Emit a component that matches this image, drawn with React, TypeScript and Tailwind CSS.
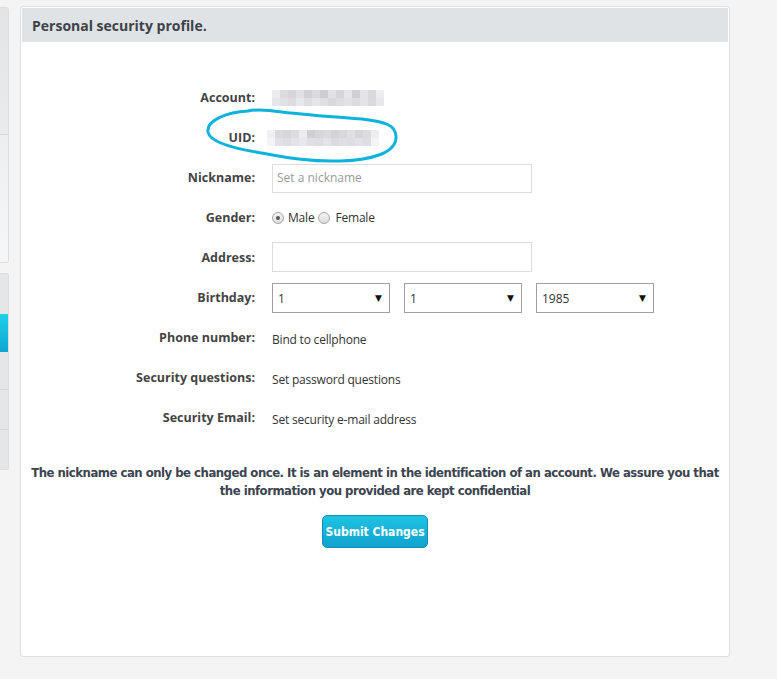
import React from 'react';

const labelFont = "font-['Open_Sans','DejaVu_Sans',sans-serif]";

// Pixelated "blurred" value blocks
const accountBlur = [
  ['bg-[#ececef]', 'bg-[#dcdce0]', 'bg-[#d6d6da]', 'bg-[#e0e0e4]', 'bg-[#d2d2d6]', 'bg-[#dadadf]', 'bg-[#cdcdd2]', 'bg-[#e2e2e6]', 'bg-[#d4d4da]', 'bg-[#e6e6ea]', 'bg-[#cfcfd4]', 'bg-[#e4e4e8]', 'bg-[#d9d9dd]', 'bg-[#ededf0]'],
  ['bg-[#e6e6ea]', 'bg-[#e2e2e6]', 'bg-[#dcdce0]', 'bg-[#e8e8ec]', 'bg-[#dedee2]', 'bg-[#e6e6ea]', 'bg-[#e0e0e4]', 'bg-[#d8d8dc]', 'bg-[#dedee2]', 'bg-[#e2e2e6]', 'bg-[#dcdce0]', 'bg-[#e4e4e8]', 'bg-[#dadade]', 'bg-[#e8e8ec]'],
];
const uidBlur = [
  ['bg-[#f0f0f2]', 'bg-[#dadade]', 'bg-[#d6d6da]', 'bg-[#dcdce0]', 'bg-[#ececef]', 'bg-[#cfcfd4]', 'bg-[#d6d6da]', 'bg-[#dadade]', 'bg-[#d3d3d8]', 'bg-[#d8d8dc]', 'bg-[#e0e0e4]', 'bg-[#d6d6da]', 'bg-[#dcdce0]', 'bg-[#eeeef0]'],
  ['bg-[#f4f4f6]', 'bg-[#e2e2e6]', 'bg-[#dedee2]', 'bg-[#e4e4e8]', 'bg-[#e8e8ec]', 'bg-[#e0e0e4]', 'bg-[#dedee2]', 'bg-[#e4e4e8]', 'bg-[#dcdce0]', 'bg-[#e0e0e4]', 'bg-[#dedee2]', 'bg-[#e2e2e6]', 'bg-[#dedee2]', 'bg-[#f4f4f6]'],
];

function Blur({ rows }: { rows: string[][] }) {
  return (
    <div className="flex flex-col">
      {rows.map((row, i) => (
        <div key={i} className="flex">
          {row.map((c, j) => (
            <div key={j} className={`h-[8px] w-[8px] ${c}`} />
          ))}
        </div>
      ))}
    </div>
  );
}

function Radio({ checked }: { checked?: boolean }) {
  return (
    <span className="flex h-[12px] w-[12px] items-center justify-center rounded-full border border-[#a6a6a6] bg-gradient-to-b from-[#f4f4f4] to-[#dcdcdc]">
      {checked && <span className="h-[4px] w-[4px] rounded-full bg-[#555]" />}
    </span>
  );
}

function Select({ value }: { value: string }) {
  return (
    <div className="flex h-[30px] w-[118px] items-center justify-between border border-[#a0a0a0] bg-white pl-[5px] pr-[7px] text-[12px] text-[#333]">
      <span className="pt-[2px]">{value}</span>
      <span className="text-[9px] text-[#111]">▼</span>
    </div>
  );
}

const valueText = 'text-[12px] tracking-[-0.2px] text-[#333]';

const rows: { label: string; content: React.ReactNode }[] = [
  { label: 'Account:', content: <Blur rows={accountBlur} /> },
  { label: 'UID:', content: <div className="-ml-[5px]"><Blur rows={uidBlur} /></div> },
  {
    label: 'Nickname:',
    content: (
      <div className="flex h-[29px] w-[260px] items-center border border-[#dcdcdc] px-[4px] text-[12px] text-[#9a9a9a]">
        Set a nickname
      </div>
    ),
  },
  {
    label: 'Gender:',
    content: (
      <div className={`flex items-center ${valueText}`}>
        <Radio checked />
        <span className="ml-[4px] mr-[4px]">Male</span>
        <Radio />
        <span className="ml-[5px]">Female</span>
      </div>
    ),
  },
  {
    label: 'Address:',
    content: <div className="-mt-[2px] h-[30px] w-[260px] border border-[#dcdcdc]" />,
  },
  {
    label: 'Birthday:',
    content: (
      <div className="flex gap-[14px]">
        <Select value="1" />
        <Select value="1" />
        <Select value="1985" />
      </div>
    ),
  },
  { label: 'Phone number:', content: <span className={valueText}>Bind to cellphone</span> },
  { label: 'Security questions:', content: <span className={valueText}>Set password questions</span> },
  { label: 'Security Email:', content: <span className={valueText}>Set security e-mail address</span> },
];

function Sidebar() {
  return (
    <div className="flex w-[9px] flex-col gap-[10px] pt-[7px]">
      <div className="flex h-[256px] flex-col overflow-hidden rounded-r-[3px] border border-l-0 border-[#dcdfe2]">
        <div className="h-[127px] border-b border-[#d4d7da] bg-gradient-to-b from-[#e2e4e6] to-[#e9ebed]" />
        <div className="flex-1 bg-gradient-to-b from-[#eceef0] to-[#f6f7f8]" />
      </div>
      <div className="flex h-[197px] flex-col overflow-hidden rounded-r-[3px] border border-l-0 border-[#dcdfe2] bg-[#e4e6e8]">
        <div className="h-[40px]" />
        <div className="h-[38px] bg-gradient-to-b from-[#1ed0e8] to-[#0fa6cf]" />
        <div className="h-[38px] border-b border-[#d4d7da]" />
        <div className="h-[40px] border-b border-[#d4d7da]" />
        <div className="flex-1" />
      </div>
    </div>
  );
}

export default function App() {
  return (
    <div className={`relative flex h-[679px] w-[777px] gap-[11px] overflow-hidden bg-[#f4f4f4] ${labelFont}`}>
      <Sidebar />
      <div className="mt-[6px] flex h-[651px] w-[710px] flex-col rounded-[3px] border border-[#dde0e3] bg-white p-[1px]">
        <div className="flex h-[34px] items-center bg-[#dfe3e6] px-[10px] text-[14px] font-bold text-[#3d4148]">
          Personal security profile.
        </div>
        <div className="flex flex-col pt-[36px]">
          {rows.map((r) => (
            <div key={r.label} className="flex h-[40px] items-center">
              <div className="w-[233px] text-right text-[12.5px] font-bold text-[#444]">{r.label}</div>
              <div className="ml-[17px]">{r.content}</div>
            </div>
          ))}
        </div>
        <p className="mt-[26px] px-[8px] text-center font-['DejaVu_Sans_Condensed',sans-serif] text-[13px] font-bold leading-[18px] tracking-[-0.5px] text-[#3b4450]">
          The nickname can only be changed once. It is an element in the identification of an account. We assure you that the information you provided are kept confidential
        </p>
        <div className="mt-[15px] flex justify-center">
          <button className="h-[33px] w-[106px] rounded-[5px] border border-[#138fb3] bg-gradient-to-b from-[#1dc3e3] to-[#10a3cf] font-['DejaVu_Sans_Condensed',sans-serif] text-[12px] font-bold text-white">
            Submit Changes
          </button>
        </div>
      </div>
      <svg className="pointer-events-none absolute left-0 top-0" width="777" height="679" viewBox="0 0 777 679">
        <path
          d="M 248 111 C 228 112, 206 120, 208 132 C 210 142, 232 148, 256 152 C 280 156, 305 162, 340 161 C 372 160, 397 153, 396 136 C 395 125, 386 122, 362 119 C 335 117, 305 115, 282 112 C 268 110, 256 109, 248 111"
          fill="none"
          stroke="#0eb2db"
          strokeWidth="3"
          strokeLinecap="round"
        />
      </svg>
    </div>
  );
}
